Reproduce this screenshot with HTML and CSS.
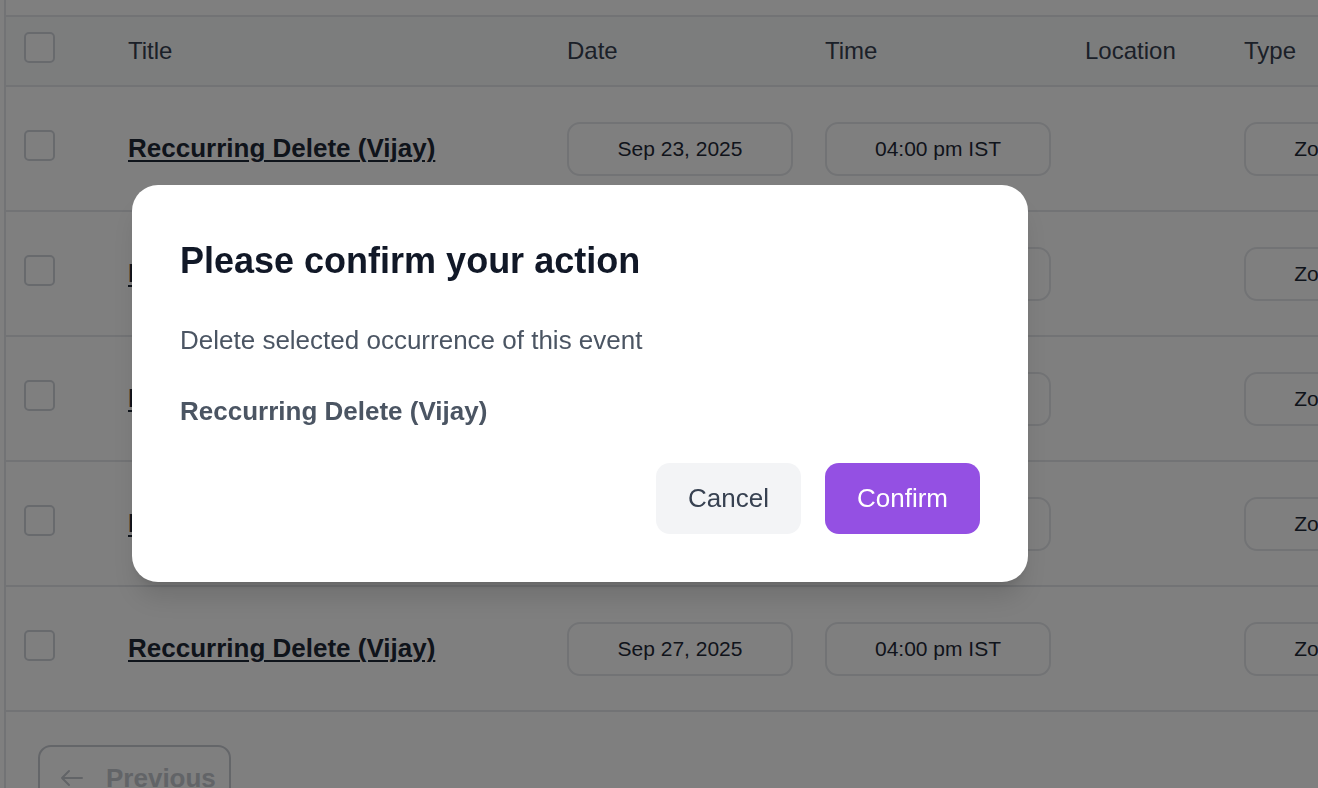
FILE: index.html
```html
<!DOCTYPE html>
<html lang="en">

<head>
    <meta charset="UTF-8">
    <meta name="viewport" content="width=device-width, initial-scale=1.0">
    <title>Events - Confirm action</title>
    <link rel="stylesheet" href="styles.css">
</head>

<body>
    <div class="card">
        <table class="events">
            <thead>
                <tr>
                    <th class="events__check"><span class="checkbox"></span></th>
                    <th>Title</th>
                    <th>Date</th>
                    <th>Time</th>
                    <th>Location</th>
                    <th>Type</th>
                    <th></th>
                </tr>
            </thead>
            <tbody>
                <tr>
                    <td class="events__check"><span class="checkbox"></span></td>
                    <td><a class="events__title" href="#">Reccurring Delete (Vijay)</a></td>
                    <td><span class="pill">Sep 23, 2025</span></td>
                    <td><span class="pill">04:00 pm IST</span></td>
                    <td></td>
                    <td><span class="pill pill--type">Zoom</span></td>
                    <td></td>
                </tr>
                <tr>
                    <td class="events__check"><span class="checkbox"></span></td>
                    <td><a class="events__title" href="#">Reccurring Delete (Vijay)</a></td>
                    <td><span class="pill">Sep 24, 2025</span></td>
                    <td><span class="pill">04:00 pm IST</span></td>
                    <td></td>
                    <td><span class="pill pill--type">Zoom</span></td>
                    <td></td>
                </tr>
                <tr>
                    <td class="events__check"><span class="checkbox"></span></td>
                    <td><a class="events__title" href="#">Reccurring Delete (Vijay)</a></td>
                    <td><span class="pill">Sep 25, 2025</span></td>
                    <td><span class="pill">04:00 pm IST</span></td>
                    <td></td>
                    <td><span class="pill pill--type">Zoom</span></td>
                    <td></td>
                </tr>
                <tr>
                    <td class="events__check"><span class="checkbox"></span></td>
                    <td><a class="events__title" href="#">Reccurring Delete (Vijay)</a></td>
                    <td><span class="pill">Sep 26, 2025</span></td>
                    <td><span class="pill">04:00 pm IST</span></td>
                    <td></td>
                    <td><span class="pill pill--type">Zoom</span></td>
                    <td></td>
                </tr>
                <tr>
                    <td class="events__check"><span class="checkbox"></span></td>
                    <td><a class="events__title" href="#">Reccurring Delete (Vijay)</a></td>
                    <td><span class="pill">Sep 27, 2025</span></td>
                    <td><span class="pill">04:00 pm IST</span></td>
                    <td></td>
                    <td><span class="pill pill--type">Zoom</span></td>
                    <td></td>
                </tr>
            </tbody>
        </table>
        <div class="pager">
            <button class="pager__btn" disabled>
                <svg width="24" height="24" viewBox="0 0 24 24" fill="none" stroke="currentColor" stroke-width="2" stroke-linecap="round" stroke-linejoin="round">
                    <path d="M22 12H2M9 5l-7 7 7 7" />
                </svg>
                Previous
            </button>
        </div>
    </div>

    <!-- confirm dialog -->
    <div class="backdrop"></div>
    <div class="dialog">
        <h2 class="dialog__title">Please confirm your action</h2>
        <p class="dialog__text">Delete selected occurrence of this event</p>
        <p class="dialog__name">Reccurring Delete (Vijay)</p>
        <div class="dialog__actions">
            <button class="btn btn--cancel">Cancel</button>
            <button class="btn btn--confirm">Confirm</button>
        </div>
    </div>
</body>

</html>
```

FILE: styles.css
```css
body {
    margin: 0;
    font-family: "Liberation Sans", Arial, sans-serif;
    background-color: #fff;
    color: #374151;
    overflow: hidden;
}

.card {
    margin-left: 4px;
    padding-top: 15px;
    border-left: 2px solid #e5e7eb;
    min-height: 800px;
}

.events {
    width: 1622px;
    table-layout: fixed;
    border-collapse: separate;
    border-spacing: 0;
}

.events th,
.events td {
    padding: 35px 16px 34px;
    border-bottom: 2px solid #e5e7eb;
    text-align: left;
    vertical-align: middle;
    line-height: 1.15;
}

.events th {
    padding-top: 15px;
    padding-bottom: 15px;
    border-top: 2px solid #e5e7eb;
    background-color: #f9fafb;
    font-size: 24px;
    font-weight: normal;
    color: #374151;
}

.events th:nth-child(1) { width: 88px; }
.events th:nth-child(2) { width: 407px; }
.events th:nth-child(3) { width: 226px; }
.events th:nth-child(4) { width: 228px; }
.events th:nth-child(5) { width: 127px; }
.events th:nth-child(6) { width: 168px; }
.events th:nth-child(7) { width: 168px; }

.events .events__check {
    padding-left: 18px;
    padding-right: 0;
}

.checkbox {
    display: block;
    width: 27px;
    height: 27px;
    margin-bottom: 7px;
    border: 2px solid #d1d5db;
    border-radius: 5px;
    background-color: #fff;
}

.events__title {
    font-size: 26px;
    font-weight: bold;
    color: #1f2937;
    text-decoration: underline;
    text-decoration-thickness: 2px;
    text-underline-offset: 3px;
    white-space: nowrap;
}

.pill {
    display: flex;
    align-items: center;
    justify-content: center;
    width: 222px;
    height: 50px;
    border: 2px solid #e5e7eb;
    border-radius: 13px;
    font-size: 21px;
    color: #1f2937;
    white-space: nowrap;
}

.pill--type {
    width: 150px;
}

.pager {
    padding: 33px 0 0 32px;
}

.pager__btn {
    display: flex;
    align-items: center;
    gap: 22px;
    width: 193px;
    height: 66px;
    padding: 0 0 0 20px;
    border: 2px solid #c9ccd3;
    border-radius: 13px;
    background-color: #fff;
    font-family: inherit;
    font-size: 26px;
    font-weight: bold;
    color: #c4c8cf;
}

.backdrop {
    position: fixed;
    inset: 0;
    background-color: rgba(0, 0, 0, 0.5);
}

.dialog {
    position: fixed;
    left: 132px;
    top: 185px;
    width: 800px;
    padding: 48px;
    display: flex;
    flex-direction: column;
    gap: 32px;
    background-color: #fff;
    border-radius: 26px;
    box-shadow: 0 20px 25px -5px rgba(0, 0, 0, 0.12), 0 8px 10px -6px rgba(0, 0, 0, 0.12);
}

.dialog__title {
    margin: 0;
    font-size: 36px;
    line-height: 55px;
    font-weight: bold;
    color: #111827;
}

.dialog__text,
.dialog__name {
    margin: 0;
    font-size: 26px;
    line-height: 40px;
    color: #4b5563;
}

.dialog__name {
    font-weight: bold;
    line-height: 39px;
}

.dialog__actions {
    display: flex;
    justify-content: flex-end;
    gap: 24px;
}

.btn {
    height: 71px;
    padding: 0 32px;
    border: none;
    border-radius: 14px;
    font-family: inherit;
    font-size: 26px;
    cursor: pointer;
}

.btn--cancel {
    background-color: #f3f4f6;
    color: #374151;
}

.btn--confirm {
    background-color: #9450e3;
    color: #fff;
}
```
